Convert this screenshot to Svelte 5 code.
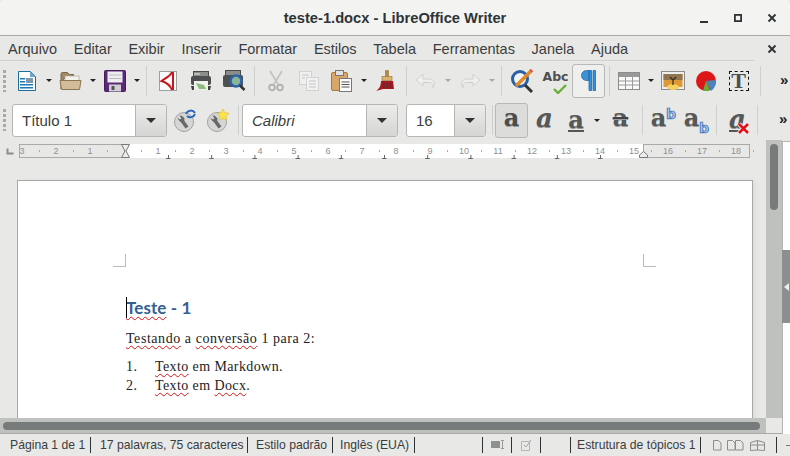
<script>
	const menus = ['Arquivo', 'Editar', 'Exibir', 'Inserir', 'Formatar', 'Estilos', 'Tabela', 'Ferramentas', 'Janela', 'Ajuda'];

	// ruler: one number per cm, 34px apart, zero at the left margin
	const zero = 124;
	const leftNums = [3, 2, 1];
	const rightNums = Array.from({ length: 18 }, (_, i) => i + 1);
	const dots = Array.from({ length: 22 }, (_, i) => i - 3);
	const tabs = Array.from({ length: 11 }, (_, i) => 168 + i * 43.2);
</script>

{#snippet arrow(dim = false)}
	<span class="arrow" class:dim></span>
{/snippet}

{#snippet wrench()}
	<circle cx="11" cy="14" r="9.500" fill="#d6d6d5" stroke="#a2a2a2" />
	<path d="M14 19.500L8.500 12" stroke="#676a6a" stroke-width="3.600" />
	<path d="M4.500 9.500c.5 3 3 5.500 6.500 4.500l.5-3.500c-1-2-3-3.500-5-3l2 3-2 1z" fill="#676a6a" />
{/snippet}

<div class="win">
	<header class="title">
		<span class="title-text">teste-1.docx - LibreOffice Writer</span>
		<div class="wm">
			<svg width="12" height="12" viewBox="0 0 12 12"><rect x="2" y="9" width="8" height="2" fill="#2e3436" /></svg>
			<svg width="12" height="12" viewBox="0 0 12 12"><rect x="2.900" y="2.900" width="6.200" height="6.200" fill="none" stroke="#2e3436" stroke-width="1.800" /></svg>
			<svg width="12" height="12" viewBox="0 0 12 12"><path d="M2.500 2.500l7 7M9.500 2.500l-7 7" stroke="#2e3436" stroke-width="1.900" /></svg>
		</div>
	</header>

	<nav class="menu">
		<div class="menu-items">
			{#each menus as m}<span>{m}</span>{/each}
		</div>
		<svg class="menu-x" width="12" height="12" viewBox="0 0 12 12"><path d="M2.500 2.500l7 7M9.500 2.500l-7 7" stroke="#2e3436" stroke-width="1.900" /></svg>
	</nav>

	<div class="bar bar1">
		<span class="grip"></span>
		<span class="tool">
			<svg width="20" height="22" viewBox="0 0 20 22">
				<path d="M1.500 1.500h12l5 5v14h-17z" fill="#fdfdfd" stroke="#1d6c9f" />
				<path d="M13 1l6 6h-6z" fill="#6fa6c8" />
				<path d="M3 8h5v1.500h-5zM3 11h5v1.500h-5zM3 14h13v1.500h-13zM3 17h13v1.500h-13z" fill="#1f79b4" />
				<rect x="9" y="8" width="7" height="5" fill="#7b98ad" />
			</svg>
		</span>
		{@render arrow()}
		<span class="tool">
			<svg width="23" height="20" viewBox="0 0 23 20">
				<path d="M2 18V3q0-1.500 1.500-1.500h5l2 2h4v4h-10z" fill="#a08a6a" stroke="#7b6748" />
				<rect x="6" y="5" width="14" height="7" fill="#f4f2ec" stroke="#a9a59a" stroke-width=".7" />
				<path d="M1 9.500h21l-1.500 9h-18z" fill="#d3bd98" stroke="#8a7654" />
			</svg>
		</span>
		{@render arrow()}
		<span class="tool">
			<svg width="22" height="22" viewBox="0 0 22 22">
				<rect x=".5" y=".5" width="21" height="21" rx="1" fill="#5d2a78" stroke="#441c5a" />
				<rect x="3.500" y="1.500" width="15" height="11" fill="#eeeef0" />
				<path d="M5 5h12M5 8.500h12" stroke="#b9b9c2" />
				<rect x="5" y="14.500" width="12" height="7" fill="#cfcfd4" />
				<rect x="7.500" y="16" width="3" height="4" fill="#555" />
			</svg>
		</span>
		{@render arrow()}
		<span class="sep"></span>
		<span class="tool">
			<svg width="18" height="20" viewBox="0 0 18 20">
				<rect x=".5" y=".5" width="17" height="19" fill="#fafafa" stroke="#a0a0a0" />
				<path d="M13 1C12 5 5 8 2.500 10 6 11 11 14 13 19M14 1v18" fill="none" stroke="#c8151b" stroke-width="2" />
			</svg>
		</span>
		<span class="tool">
			<svg width="22" height="20" viewBox="0 0 22 20">
				<rect x="3.500" y=".5" width="15" height="7" fill="#8b8d8b" stroke="#4a4c4c" />
				<rect x="1" y="5" width="20" height="9" rx="2" fill="#4c5050" />
				<path d="M4 3h6" stroke="#e8e8e8" />
				<path d="M4 10h14v9h-14z" fill="#eef2ea" />
				<path d="M6 12l8 2 2 4h-7z" fill="#8dbb7c" />
				<path d="M1 15h3v4h-2zM21 15h-3v4h2z" fill="#3e4242" />
			</svg>
		</span>
		<span class="tool">
			<svg width="24" height="22" viewBox="0 0 24 22">
				<rect x="3.500" y=".5" width="15" height="7" fill="#8b8d8b" stroke="#4a4c4c" />
				<rect x="1" y="5" width="20" height="12" rx="2" fill="#4c5050" />
				<circle cx="14" cy="11" r="5.500" fill="#8ab59a" stroke="#2b62a8" stroke-width="2.500" />
				<path d="M18 15.500l4.500 4.500" stroke="#333" stroke-width="2.500" />
			</svg>
		</span>
		<span class="sep"></span>
		<span class="tool faded">
			<svg width="16" height="22" viewBox="0 0 16 22">
				<path d="M2 1l8 13M14 1l-8 13" stroke="#bdbdbd" stroke-width="1.800" />
				<circle cx="4" cy="17.500" r="2.800" fill="none" stroke="#a5a5a5" stroke-width="1.800" />
				<circle cx="12" cy="17.500" r="2.800" fill="none" stroke="#a5a5a5" stroke-width="1.800" />
			</svg>
		</span>
		<span class="tool faded">
			<svg width="20" height="20" viewBox="0 0 20 20">
				<rect x=".5" y=".5" width="12" height="13" fill="#f2f2f2" stroke="#cfcfcf" />
				<rect x="7.500" y="6.500" width="12" height="13" fill="#f4f4f4" stroke="#cfcfcf" />
				<path d="M3 4h7M3 7h3M10 10h7M10 13h7M10 16h7" stroke="#bdbdbd" />
			</svg>
		</span>
		<span class="tool">
			<svg width="21" height="22" viewBox="0 0 21 22">
				<rect x=".5" y="2.500" width="16" height="18" rx="1.500" fill="#d9a668" stroke="#a37b45" />
				<rect x="4.500" y=".5" width="8" height="5" fill="#e0e0e0" stroke="#777" />
				<rect x="8.500" y="8.500" width="12" height="13" fill="#fbfbfb" stroke="#777" />
				<path d="M10.500 12h8M10.500 14.500h8M10.500 17h8" stroke="#555" />
			</svg>
		</span>
		{@render arrow()}
		<span class="tool">
			<svg width="22" height="22" viewBox="0 0 22 22">
				<rect x="10" y="0" width="4" height="7" rx="1" fill="#b08a4e" />
				<rect x="7" y="6.500" width="10" height="4" fill="#dcb36c" stroke="#96743c" stroke-width=".6" />
				<path d="M6 11h12l1 8h-11l-7 2c3-2 5-5 5-10z" fill="#a01a22" />
				<path d="M9 13v5M12 13v5M15 13v5" stroke="#5b2a2e" />
			</svg>
		</span>
		<span class="sep"></span>
		<span class="tool faded pull">
			<svg width="22" height="16" viewBox="0 0 22 16">
				<path d="M8 1L1 7l7 6V9.500h6c3 0 4 1.500 4 5.500 3-5 1-9-4-9H8z" fill="#f1f1f1" stroke="#cbcbcb" />
			</svg>
		</span>
		{@render arrow(true)}
		<span class="tool faded">
			<svg width="22" height="16" viewBox="0 0 22 16">
				<path d="M14 1l7 6-7 6V9.500H8c-3 0-4 1.500-4 5.500C1 10 3 6 8 6h6z" fill="#f1f1f1" stroke="#cbcbcb" />
			</svg>
		</span>
		{@render arrow(true)}
		<span class="sep"></span>
		<span class="tool">
			<svg width="25" height="24" viewBox="0 0 25 24">
				<circle cx="10" cy="10" r="7.500" fill="#f1f3f5" stroke="#2a5fa6" stroke-width="3" />
				<path d="M15 16l7 7" stroke="#333" stroke-width="3" />
				<path d="M6 17L20 3" stroke="#e08a2a" stroke-width="3.500" />
				<path d="M20 3l2-2" stroke="#d7603c" stroke-width="3.500" />
			</svg>
		</span>
		<span class="tool abc">
			<span class="abc-text">Abc</span>
			<svg class="check" width="14" height="10" viewBox="0 0 14 10"><path d="M1 5l4 4 8-8" fill="none" stroke="#69b033" stroke-width="2.400" /></svg>
		</span>
		<span class="tool on">
			<svg width="16" height="24" viewBox="0 0 16 24">
				<path d="M8 1.500H5.500a5 5 0 0 0 0 10H8zM8 1.500h2.500v20H8zM12 1.500h2.500v20H12z" fill="#3c92d6" stroke="#1e69ab" stroke-width=".8" />
			</svg>
		</span>
		<span class="sep"></span>
		<span class="tool pull">
			<svg width="22" height="18" viewBox="0 0 22 18">
				<rect x=".5" y=".5" width="21" height="17" fill="#fafafa" stroke="#8c8c8c" />
				<rect x="1" y="1" width="20" height="4" fill="#999" />
				<path d="M1 9h20M1 13h20M7.500 1v16M14.500 1v16" stroke="#9a9a9a" />
			</svg>
		</span>
		{@render arrow()}
		<span class="tool">
			<svg width="24" height="19" viewBox="0 0 24 19">
				<rect x=".5" y=".5" width="23" height="18" fill="#eee" stroke="#8d8d8d" />
				<rect x="2.500" y="3" width="19" height="13" fill="#dc9a36" />
				<rect x="2.500" y="3" width="19" height="6" fill="#8f7650" />
				<ellipse cx="12" cy="16" rx="6" ry="3" fill="#f5cf5f" />
				<path d="M12 14V9l-3-3M12 9l3-3" stroke="#3a2a1a" fill="none" stroke-width="1.200" />
			</svg>
		</span>
		<span class="tool">
			<svg width="20" height="20" viewBox="0 0 20 20">
				<circle cx="10" cy="10" r="10" fill="#dd1717" />
				<path d="M10 10l10-1v3q-1 5-5 8z" fill="#4e84bd" />
				<path d="M10 10l4 9.500q-3 1-7 .3z" fill="#66ad3c" />
			</svg>
		</span>
		<span class="tool">
			<span class="textbox">T</span>
		</span>
		<span class="sep wide"></span>
		<span class="more">»</span>
	</div>

	<div class="bar bar2">
		<span class="grip"></span>
		<span class="combo style-combo">
			<span class="field">Título 1</span>
			<span class="drop"></span>
		</span>
		<span class="tool">
			<svg width="24" height="24" viewBox="0 0 24 24">
				{@render wrench()}
				<path d="M13 6a5 5 0 0 1 9-1M22 6a5 5 0 0 1-8 2" fill="none" stroke="#2a68bd" stroke-width="2" />
			</svg>
		</span>
		<span class="tool">
			<svg width="24" height="24" viewBox="0 0 24 24">
				{@render wrench()}
				<path d="M17 1l1.800 3.800 4.200.5-3 2.900.8 4.100-3.800-2-3.800 2 .8-4.100-3-2.900 4.200-.5z" fill="#fbe44a" stroke="#d9bd2c" stroke-width=".6" />
			</svg>
		</span>
		<span class="sep s2"></span>
		<span class="combo font-combo">
			<span class="field font-name">Calibri</span>
			<span class="drop"></span>
		</span>
		<span class="combo size-combo">
			<span class="field">16</span>
			<span class="drop"></span>
		</span>
		<span class="sep s3"></span>
		<span class="tool on bold-btn"><span class="a-glyph heavy">a</span></span>
		<span class="tool"><span class="a-glyph ital">a</span></span>
		<span class="tool narrow"><span class="a-glyph under">a</span></span>
		{@render arrow()}
		<span class="tool strike-tool"><span class="a-glyph strike">a</span></span>
		<span class="sep s4"></span>
		<span class="tool scr"><span class="a-glyph">a</span><span class="sup">b</span></span>
		<span class="tool scr"><span class="a-glyph">a</span><span class="sub">b</span></span>
		<span class="sep s6"></span>
		<span class="tool clear">
			<span class="a-glyph ital under">a</span>
			<svg class="red-x" width="13" height="13" viewBox="0 0 13 13"><path d="M2 2l9 9M11 2l-9 9" stroke="#fff" stroke-width="4.500" /><path d="M2 2l9 9M11 2l-9 9" stroke="#e0131b" stroke-width="2.800" /></svg>
		</span>
		<span class="sep s5"></span>
		<span class="more">»</span>
	</div>

	<div class="content">
		<div class="main">
			<div class="middle">
				<div class="left">
					<div class="ruler-row">
						<svg class="ruler" width="766" height="15" viewBox="0 0 766 15">
							<path d="M7.500 4.500v5h6" fill="none" stroke="#8c8c8c" stroke-width="2" />
							<rect x="19.500" y=".5" width="105" height="13" fill="none" stroke="#a9a9a9" />
							<rect x="125" y="0" width="518" height="14" fill="#fff" />
							<rect x="643.500" y=".5" width="106" height="13" fill="none" stroke="#a9a9a9" />
							{#each dots as d}
								<rect x={zero + 17 + d * 34} y="6" width="1" height="2" fill="#aaa" />
							{/each}
							{#each leftNums as n}
								<text x={zero - n * 34} y="10" text-anchor="middle">{n}</text>
							{/each}
							{#each rightNums as n}
								<text x={zero + n * 34} y="10" text-anchor="middle">{n}</text>
							{/each}
							{#each tabs as t}
								<path d="M{t - 2} 14.500h4.500M{t + .5} 11v4" stroke="#666" fill="none" />
							{/each}
							<path d="M121.500 .5h8l-3.500 6.500 3.500 6.500h-8l3.500-6.500z" fill="#eee" stroke="#777" />
							<path d="M639.500 13.500v-2.500l4-3.500 4 3.500v2.500z" fill="#eee" stroke="#777" />
						</svg>
					</div>
					<main class="workspace">
						<article class="page">
							<div class="marks">
								<span class="mark ml"></span>
								<span class="mark mr"></span>
							</div>
							<div class="body">
								<h1><span class="caret"></span><span class="wavy">Teste</span> - 1</h1>
								<p class="lead"><span class="wavy">Testando</span> a <span class="wavy">conversão</span> 1 para 2:</p>
								<ol>
									<li><span class="num">1.</span><span><span class="wavy">Texto</span> em Markdown.</span></li>
									<li><span class="num">2.</span><span><span class="wavy">Texto</span> em <span class="wavy">Docx</span>.</span></li>
								</ol>
							</div>
						</article>
					</main>
				</div>
				<div class="vscroll"><span class="vthumb"></span></div>
			</div>
			<div class="hrow">
				<div class="hscroll"><span class="hthumb"></span></div>
				<span class="corner"></span>
			</div>
		</div>
		<aside class="deck">
			<span class="handle"><span class="tri"></span></span>
		</aside>
	</div>

	<footer class="status">
		<span class="cell c1">Página 1 de 1</span>
		<span class="cell c2">17 palavras, 75 caracteres</span>
		<span class="cell c3">Estilo padrão</span>
		<span class="cell c4">Inglês (EUA)</span>
		<span class="cell c5"></span>
		<span class="cell c6">
			<svg width="14" height="10" viewBox="0 0 14 10"><rect x="0" y="1" width="9" height="7" fill="#8f9090" /><path d="M10 .5h3M11.500 .5v8M10 8.500h3" stroke="#999" fill="none" /></svg>
		</span>
		<span class="cell c7">
			<svg width="12" height="12" viewBox="0 0 12 12"><path d="M.5 2.500h8v9h-8z" fill="none" stroke="#b5b5b5" /><path d="M3 6l2 2 5-7" fill="none" stroke="#a8a8a8" /></svg>
		</span>
		<span class="cell c8"></span>
		<span class="cell c9">Estrutura de tópicos 1</span>
		<span class="cell c10">
			<svg width="58" height="12" viewBox="0 0 58 12">
				<path d="M1.500 1.500h5l2.500 2.500v7h-7.500z" fill="none" stroke="#8c8c8c" />
				<path d="M15.500 1.500h5l2.500 2.500v7h-7.500zM23.500 1.500h5l2.500 2.500v7h-7.500z" fill="none" stroke="#8c8c8c" />
				<path d="M38.500 3.500l7-2v9.500l-7 .5zM45.500 1.500l7 2v8l-7-.5zM38.500 6h14" fill="none" stroke="#8c8c8c" />
			</svg>
		</span>
		<span class="cell c11"><span class="dash"></span></span>
	</footer>
</div>

<style>
	:global(body) {
		margin: 0;
	}
	.win {
		width: 790px;
		height: 456px;
		overflow: hidden;
		display: flex;
		flex-direction: column;
		background: #e8e8e7;
		color: #3a3d3d;
		font-family: 'Liberation Sans', Arial, sans-serif;
	}

	/* title bar */
	.title {
		flex: none;
		height: 36px;
		box-sizing: border-box;
		display: flex;
		align-items: center;
		justify-content: center;
		position: relative;
		background: #f3f3f2;
		border-bottom: 1px solid #a9a9a7;
		border-radius: 4px 4px 0 0;
	}
	.title-text {
		font-size: 14.7px;
		font-weight: 700;
		color: #2e3436;
	}
	.wm {
		position: absolute;
		right: 12px;
		top: 12px;
		display: flex;
		gap: 22px;
	}

	/* menu */
	.menu {
		flex: none;
		height: 25px;
		display: flex;
		align-items: center;
		justify-content: space-between;
		padding: 0 12px 0 0;
	}
	.menu-items {
		width: 754px;
		height: 25px;
		box-sizing: border-box;
		padding: 1px 0 0 8px;
		border-bottom: 1px solid #cfcfcd;
		display: flex;
		align-items: center;
		gap: 16.7px;
		font-size: 14.5px;
	}
	.menu-x {
		flex: none;
	}

	/* toolbars */
	.bar {
		flex: none;
		display: flex;
		align-items: center;
		padding-left: 3px;
	}
	.bar1 {
		height: 39px;
	}
	.bar2 {
		height: 40px;
	}
	.grip {
		flex: none;
		width: 3px;
		height: 22px;
		margin-right: 4px;
		background: repeating-linear-gradient(#a9a9a9 0 3px, transparent 3px 5px);
	}
	.tool {
		flex: none;
		width: 33px;
		height: 34px;
		box-sizing: border-box;
		display: flex;
		align-items: center;
		justify-content: center;
		position: relative;
	}
	.tool.on {
		border: 1px solid #b8b8b8;
		border-radius: 3px;
		background: #efefee;
	}
	.faded {
		opacity: 0.85;
	}
	.pull {
		margin-left: -2px;
	}
	.arrow {
		flex: none;
		width: 11px;
		display: flex;
		justify-content: center;
	}
	.arrow::before {
		content: '';
		border: 3px solid transparent;
		border-top: 3px solid #222;
		border-bottom: 0;
		width: 0;
		height: 0;
	}
	.arrow.dim::before {
		border-top-color: #a8a8a8;
	}
	.sep {
		flex: none;
		width: 1px;
		height: 30px;
		margin: 0 4px;
		background: #cfcfcd;
	}
	.sep.wide {
		margin: 0 19px 0 5px;
	}
	.more {
		flex: none;
		font-size: 15px;
		font-weight: 700;
		color: #222;
		line-height: 1;
		margin-top: -3px;
	}
	.abc-text {
		font-family: 'DejaVu Sans', sans-serif;
		font-weight: 700;
		font-size: 12.5px;
		color: #4c5050;
		margin-top: -9px;
	}
	.check {
		position: absolute;
		left: 14px;
		top: 20px;
	}
	.textbox {
		width: 20px;
		height: 20px;
		box-sizing: border-box;
		border: 1px dashed #111;
		display: flex;
		align-items: center;
		justify-content: center;
		font-family: 'Liberation Serif', serif;
		font-weight: 700;
		font-size: 22px;
		color: #4c5050;
	}

	/* comboboxes */
	.combo {
		flex: none;
		height: 33px;
		box-sizing: border-box;
		display: flex;
		border: 1px solid #b6b6b4;
		border-radius: 3px;
		background: #fff;
		font-size: 15px;
		overflow: hidden;
	}
	.style-combo {
		width: 155px;
		margin: 0 1px 0 2px;
	}
	.font-combo {
		width: 156px;
	}
	.size-combo {
		width: 80px;
		margin-left: 8px;
	}
	.field {
		flex: 1;
		display: flex;
		align-items: center;
		padding-left: 9px;
	}
	.drop {
		flex: none;
		width: 30px;
		border-left: 1px solid #b6b6b4;
		background: linear-gradient(#ececeb, #d5d5d3);
		display: flex;
		align-items: center;
		justify-content: center;
	}
	.drop::before {
		content: '';
		border: 5px solid transparent;
		border-top: 5px solid #2e3436;
		border-bottom: 0;
	}
	.font-name {
		font-style: italic;
	}
	.sep.s2 {
		margin: 0 3px 0 4px;
	}
	.sep.s3 {
		margin: 0 2px 0 6px;
	}
	.sep.s4 {
		margin: 0 3px 0 5px;
	}
	.sep.s6 {
		margin: 0 4px 0 4px;
	}
	.sep.s5 {
		margin: 0 21px 0 3px;
	}

	/* character formatting icons are real glyphs */
	.a-glyph {
		font-family: 'DejaVu Serif', serif;
		font-weight: 700;
		font-size: 24px;
		line-height: 1;
		color: #555857;
		margin-top: -4px;
		text-shadow: 0 1px 0 #9a9a9a;
	}
	.heavy {
		color: #4a4d4d;
	}
	.ital {
		font-style: italic;
		font-size: 26px;
	}
	.under {
		border-bottom: 2px solid #555857;
		line-height: 21px;
		margin-top: 0;
	}
	.strike {
		text-decoration: line-through;
		text-decoration-thickness: 2px;
		text-decoration-color: #444;
	}
	.strike-tool {
		margin-left: 2px;
	}
	.tool.bold-btn {
		height: 35px;
		background: #dcdcdb;
	}
	.narrow {
		width: 30px;
	}
	.scr {
		padding-right: 8px;
	}
	.sup,
	.sub {
		position: absolute;
		left: 20px;
		font-family: 'DejaVu Sans', sans-serif;
		font-weight: 700;
		font-size: 14px;
		color: #a9c5e8;
		-webkit-text-stroke: 0.7px #2a62ad;
	}
	.sup {
		top: 3px;
	}
	.sub {
		top: 17px;
	}
	.red-x {
		position: absolute;
		left: 16px;
		top: 19px;
	}

	/* the ruler and workspace share a column beside the vertical scrollbar */
	.content {
		flex: none;
		height: 294px;
		display: flex;
	}
	.main {
		flex: none;
		width: 782px;
	}
	.middle {
		display: flex;
		height: 278px;
	}
	.left {
		flex: none;
		width: 766px;
	}
	.ruler-row {
		height: 18px;
		box-sizing: border-box;
		padding-top: 4px;
	}
	.ruler {
		display: block;
	}
	.ruler text {
		font-family: 'Liberation Sans', sans-serif;
		font-size: 9px;
		fill: #8f8f8f;
	}

	/* document area */
	.workspace {
		height: 260px;
		overflow: hidden;
		box-sizing: border-box;
		padding: 22px 0 0 17px;
	}
	.page {
		width: 736px;
		height: 600px;
		box-sizing: border-box;
		background: #fff;
		border: 1px solid #a8a8a8;
		box-shadow: 3px 0 4px -1px #dcdcdb;
		color: #222;
	}
	.marks {
		display: flex;
		justify-content: space-between;
		padding: 73px 96px 0 95px;
	}
	.mark {
		width: 12px;
		height: 12px;
		border-bottom: 1px solid #bcbcbc;
	}
	.ml {
		border-right: 1px solid #bcbcbc;
	}
	.mr {
		border-left: 1px solid #bcbcbc;
	}
	.body {
		padding: 30px 0 0 108px;
		font-family: 'Liberation Serif', serif;
		font-size: 14px;
	}
	h1 {
		margin: 0;
		height: 20px;
		display: flex;
		align-items: center;
		white-space: pre;
		font-family: Lato, sans-serif;
		font-weight: 700;
		font-size: 17px;
		letter-spacing: 0.1px;
		color: #365f91;
		position: relative;
	}
	.caret {
		position: absolute;
		left: 0;
		top: 0;
		width: 1px;
		height: 21px;
		background: #000;
	}
	.wavy {
		text-decoration: underline wavy #d8141a 1px;
		text-underline-offset: 2px;
	}
	.lead {
		margin: 13px 0 0;
		height: 17px;
		line-height: 17px;
		letter-spacing: 0.55px;
	}
	ol {
		list-style: none;
		margin: 11px 0 0;
		padding: 0;
		letter-spacing: 0.4px;
	}
	li {
		display: flex;
		height: 19px;
		line-height: 17px;
	}
	.num {
		width: 29px;
	}

	/* scrollbars */
	.vscroll {
		flex: none;
		width: 16px;
		background: #bfc1bf;
		padding: 4px 0 0 4px;
		box-sizing: border-box;
	}
	.vthumb {
		display: block;
		width: 8px;
		height: 66px;
		border-radius: 4px;
		background: #767a7a;
	}
	.deck {
		flex: none;
		width: 8px;
		height: 293px;
		margin-top: 1px;
		background: #fff;
		border-left: 1px solid #b4b4b2;
		border-top: 1px solid #b4b4b2;
		box-sizing: border-box;
		padding-top: 108px;
	}
	.handle {
		display: flex;
		align-items: center;
		justify-content: center;
		width: 8px;
		height: 73px;
		margin-left: -1px;
		background: #8b8f8f;
	}
	.tri {
		border: 4px solid transparent;
		border-right: 5px solid #eee;
		border-left: 0;
	}
	.hrow {
		display: flex;
		height: 16px;
		border-bottom: 1px solid #a9a9a7;
		box-sizing: border-box;
	}
	.hscroll {
		flex: none;
		width: 766px;
		background: #bfc1bf;
		padding: 4px 0 0 3px;
		box-sizing: border-box;
	}
	.hthumb {
		display: block;
		width: 757px;
		height: 8px;
		border-radius: 4px;
		background: #767a7a;
	}
	.corner {
		flex: none;
		width: 16px;
	}

	/* status bar */
	.status {
		flex: none;
		height: 22px;
		display: flex;
		align-items: center;
		font-size: 12.2px;
		color: #3a3d3d;
	}
	.cell {
		flex: none;
		height: 16px;
		box-sizing: border-box;
		display: flex;
		align-items: center;
		border-right: 1px solid #2e3436;
		padding-left: 9px;
		white-space: nowrap;
	}
	.c1 { width: 91px; padding-left: 10px; }
	.c2 { width: 157px; }
	.c3 { width: 85px; padding-left: 8px; }
	.c4 { width: 82px; padding-left: 7px; }
	.c5 { width: 68px; }
	.c6 { width: 29px; padding-left: 8px; }
	.c7 { width: 29px; padding-left: 9px; }
	.c8 { width: 30px; }
	.c9 { width: 130px; padding-left: 6px; }
	.c10 { width: 76px; padding-left: 11px; }
	.c11 { border-right: 0; padding-left: 9px; }
	.dash {
		width: 6px;
		height: 1px;
		background: #777;
	}
</style>
